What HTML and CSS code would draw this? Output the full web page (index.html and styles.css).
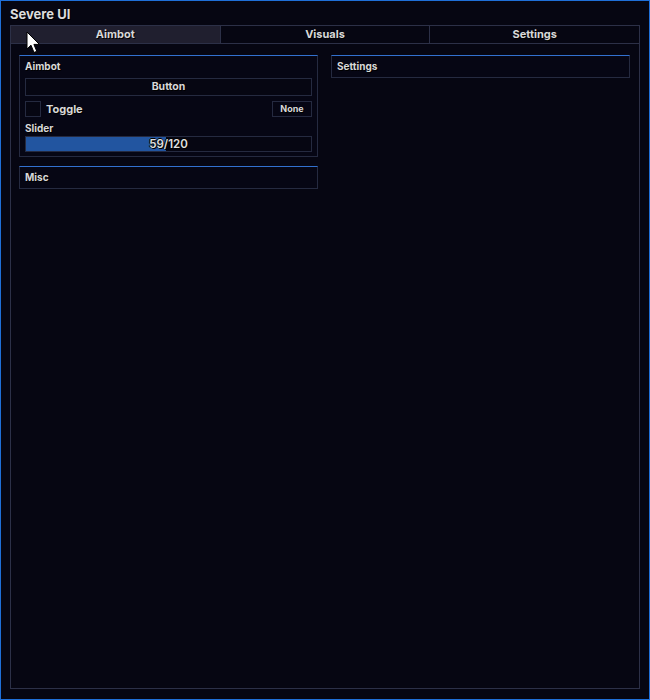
FILE: index.html
```html
<!DOCTYPE html>
<html>
<head>
<meta charset="utf-8">
<link rel="stylesheet" href="styles.css">
</head>
<body>
<div class="window">
  <div class="title">Severe UI</div>
  <div class="frame">
    <div class="tabs">
      <div class="tab active">Aimbot</div>
      <div class="tab">Visuals</div>
      <div class="tab">Settings</div>
    </div>
    <div class="content">
      <div class="column">
        <div class="group">
          <div class="group-title">Aimbot</div>
          <div class="button">Button</div>
          <div class="toggle-row">
            <div class="check"></div>
            <div class="toggle-label">Toggle</div>
            <div class="keybind">None</div>
          </div>
          <div class="slider-label">Slider</div>
          <div class="slider">
            <div class="slider-fill" style="width:49.17%"></div>
            <div class="slider-value">59/120</div>
          </div>
        </div>
        <div class="group">
          <div class="group-title">Misc</div>
        </div>
      </div>
      <div class="column">
        <div class="group">
          <div class="group-title">Settings</div>
        </div>
      </div>
    </div>
  </div>
  <svg class="cursor" width="15" height="23" viewBox="0 0 15 23">
    <path d="M1 1 L1 18 L5 14.2 L8 21.5 L10.8 20.3 L7.9 13.4 L13.4 13.4 Z" fill="#ffffff" stroke="#000000" stroke-width="1"/>
  </svg>
</div>
</body>
</html>
```
FILE: styles.css
```css
* { box-sizing: border-box; }
html, body {
  margin: 0;
  padding: 0;
  background: #060612;
}
.window {
  position: relative;
  width: 650px;
  height: 700px;
  border: 1px solid #1f6fd8;
  background: #060612;
  font-family: Inter, "Liberation Sans", sans-serif;
  color: #d6d6d6;
  display: flex;
  flex-direction: column;
  padding: 0 9px 10px 9px;
}
.title {
  height: 24px;
  padding-top: 5px;
  font-size: 13px;
  font-weight: 700;
  color: #dcdcdc;
  text-shadow: 1px 1px 0 #000;
}
.frame {
  flex: 1;
  border: 1px solid #2c3047;
  display: flex;
  flex-direction: column;
}
.tabs {
  display: flex;
  height: 18px;
  border-bottom: 1px solid #2c3047;
}
.tab {
  flex: 1;
  text-align: center;
  font-size: 11px;
  font-weight: 700;
  line-height: 17px;
  color: #d8d8d8;
  text-shadow: 1px 1px 0 #000;
  border-right: 1px solid #2c3047;
}
.tab:last-child { border-right: none; }
.tab.active { background: #201f2f; }
.content {
  display: flex;
  gap: 13px;
  padding: 11px 9px 0 8px;
}
.column {
  flex: 1;
  display: flex;
  flex-direction: column;
  gap: 9px;
}
.group {
  border: 1px solid #252a40;
  border-top: 1px solid #3271cf;
  background: #060614;
  padding: 3px 5px 4px 5px;
  display: flex;
  flex-direction: column;
}
.group-title {
  font-size: 10px;
  font-weight: 700;
  line-height: 14px;
  color: #d8d8d8;
  text-shadow: 1px 1px 0 #000;
}
.button {
  margin-top: 5px;
  height: 18px;
  border: 1px solid #252a40;
  background: #060612;
  text-align: center;
  font-size: 10.5px;
  font-weight: 700;
  line-height: 16px;
  color: #d8d8d8;
  text-shadow: 1px 1px 0 #000;
}
.toggle-row {
  margin-top: 5px;
  height: 16px;
  display: flex;
  align-items: center;
}
.check {
  width: 16px;
  height: 16px;
  border: 1px solid #252a40;
  background: #060612;
}
.toggle-label {
  flex: 1;
  margin-left: 5px;
  font-size: 11px;
  font-weight: 700;
  color: #d8d8d8;
  text-shadow: 1px 1px 0 #000;
}
.keybind {
  width: 40px;
  height: 16px;
  border: 1px solid #252a40;
  text-align: center;
  font-size: 9px;
  font-weight: 700;
  line-height: 14px;
  color: #d8d8d8;
  text-shadow: 1px 1px 0 #000;
}
.slider-label {
  margin-top: 4px;
  font-size: 10px;
  font-weight: 700;
  line-height: 14px;
  color: #d8d8d8;
  text-shadow: 1px 1px 0 #000;
}
.slider {
  position: relative;
  margin-top: 1px;
  height: 16px;
  border: 1px solid #252a40;
  background: #060612;
}
.slider-fill {
  height: 100%;
  background: #2255a0;
}
.slider-value {
  position: absolute;
  inset: 0;
  text-align: center;
  font-size: 11.5px;
  line-height: 14px;
  font-weight: 600;
  color: #e0e0e0;
  text-shadow: 1px 1px 0 #000, -1px 0 0 #000, 0 -1px 0 #000;
}
.cursor {
  position: absolute;
  left: 25px;
  top: 30px;
}
```
